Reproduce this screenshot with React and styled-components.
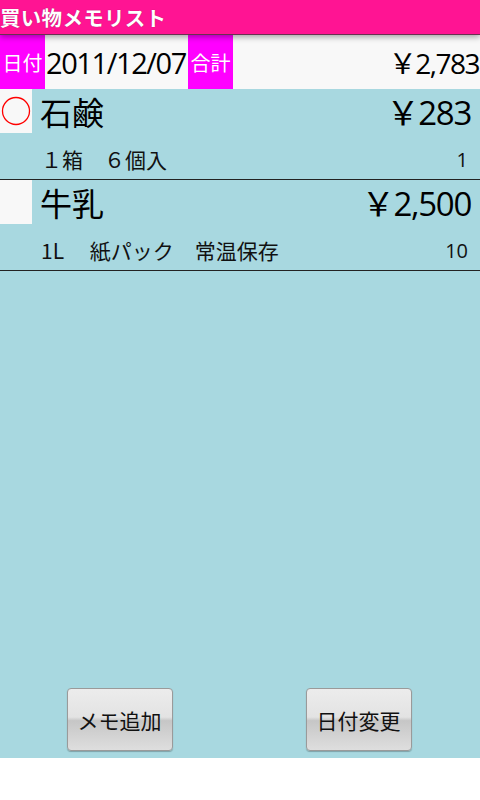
import React from 'react';
import styled, { createGlobalStyle } from 'styled-components';

const GlobalStyle = createGlobalStyle`
  html, body {
    margin: 0;
    padding: 0;
    background: #fff;
  }
  body {
    font-family: "Open Sans", "Noto Sans CJK JP", sans-serif;
    color: #000;
  }
`;

const Screen = styled.div`
  display: flex;
  flex-direction: column;
  width: 480px;
  height: 758px;
  background: #a8d8e0;
`;

const TitleBar = styled.div`
  position: relative;
  z-index: 1;
  height: 35px;
  display: flex;
  align-items: center;
  background: #ff1493;
  border-bottom: 1px solid #6a3050;
  box-shadow: 0 2px 6px rgba(0, 0, 0, 0.35);
  box-sizing: border-box;
`;

const Title = styled.h1`
  margin: 0;
  font-family: "Noto Sans CJK JP", sans-serif;
  font-size: 20.5px;
  font-weight: 700;
  letter-spacing: 0.3px;
  color: #fff;
  text-shadow: 0 0 1px rgba(0, 0, 0, 0.4);
`;

const HeaderRow = styled.div`
  display: flex;
  align-items: stretch;
  height: 54px;
  background: #f8f8f8;
`;

const Label = styled.div`
  display: flex;
  align-items: center;
  justify-content: center;
  width: 45px;
  background: #ff00ff;
  color: #fff;
  font-family: "Noto Sans CJK JP", sans-serif;
  font-size: 20px;
`;

const DateText = styled.div`
  display: flex;
  align-items: center;
  width: 142px;
  padding-left: 1px;
  font-size: 29px;
  letter-spacing: -1.4px;
`;

const TotalText = styled.div`
  flex: 1;
  display: flex;
  align-items: center;
  justify-content: flex-end;
  padding-right: 1px;
  font-size: 28px;
  letter-spacing: -1.5px;
`;

const Item = styled.div`
  border-bottom: 1px solid #222;
`;

const NameRow = styled.div`
  display: flex;
  align-items: center;
  height: 44px;
`;

const Check = styled.div`
  display: flex;
  align-items: center;
  justify-content: center;
  width: 32px;
  height: 44px;
  background: #f8f8f8;
`;

const Name = styled.div`
  margin-left: 8px;
  font-family: "Noto Sans CJK JP", sans-serif;
  font-size: 32px;
`;

const Price = styled.div`
  margin-left: auto;
  padding-right: 9px;
  font-size: 33px;
  letter-spacing: -1.3px;
`;

const SubRow = styled.div`
  display: flex;
  align-items: center;
  height: 46px;
  padding: 6px 12px 0 41px;
  box-sizing: border-box;
  font-family: "Noto Sans CJK JP", sans-serif;
  font-size: 21px;
  color: #111;
  white-space: pre;
`;

const Qty = styled.div`
  margin-left: auto;
  font-family: "Open Sans", sans-serif;
  font-size: 20px;
`;

const Spacer = styled.div`
  flex: 1;
`;

const ButtonBar = styled.div`
  display: grid;
  grid-template-columns: 1fr 1fr;
  justify-items: center;
  padding: 0 2px 7px 0;
`;

const Button = styled.button`
  width: 106px;
  height: 63px;
  border: 1px solid #9a9a9a;
  border-radius: 4px;
  background: linear-gradient(
    #ececec 0%,
    #e3e3e3 46%,
    #c6c6c6 52%,
    #d2d2d2 75%,
    #dedede 100%
  );
  box-shadow: 0 1px 1px rgba(0, 0, 0, 0.25);
  font-family: "Noto Sans CJK JP", sans-serif;
  font-size: 21px;
  color: #111;
  padding: 0;
`;

const items = [
  { name: '石鹸', price: '￥283', note: '１箱　６個入', qty: '1', checked: true },
  { name: '牛乳', price: '￥2,500', note: '1L 　紙パック　常温保存', qty: '10', checked: false },
];

const Circle = () => (
  <svg width="30" height="30" viewBox="0 0 30 30">
    <circle cx="15" cy="15" r="13.5" fill="none" stroke="#ff0000" strokeWidth="1.3" />
  </svg>
);

const App = () => {
  return (
    <>
      <GlobalStyle />
      <Screen>
        <TitleBar>
          <Title>買い物メモリスト</Title>
        </TitleBar>
        <HeaderRow>
          <Label>日付</Label>
          <DateText>2011/12/07</DateText>
          <Label>合計</Label>
          <TotalText>￥2,783</TotalText>
        </HeaderRow>
        {items.map((item) => (
          <Item key={item.name}>
            <NameRow>
              <Check>{item.checked && <Circle />}</Check>
              <Name>{item.name}</Name>
              <Price>{item.price}</Price>
            </NameRow>
            <SubRow>
              {item.note}
              <Qty>{item.qty}</Qty>
            </SubRow>
          </Item>
        ))}
        <Spacer />
        <ButtonBar>
          <Button>メモ追加</Button>
          <Button>日付変更</Button>
        </ButtonBar>
      </Screen>
    </>
  );
};

export default App;
